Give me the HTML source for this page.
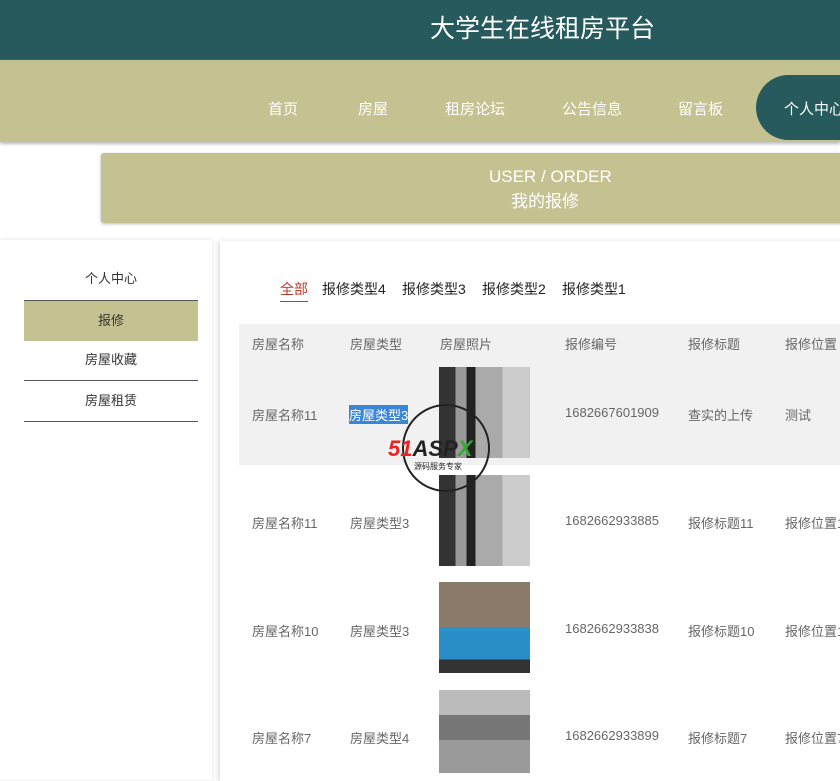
<!DOCTYPE html>
<html><head><meta charset="utf-8"><style>
body{margin:0;width:840px;height:773px;overflow:hidden;background:#fff;font-family:"Liberation Sans","Noto Sans CJK SC",sans-serif;position:relative;white-space:nowrap}
.a{position:absolute}
.hd{left:0;top:0;width:840px;height:60px;background:#265a5c;color:#fff;font-size:25px;line-height:58px}
.nav{left:0;top:60px;width:840px;height:82px;background:#c5c292;box-shadow:0 2px 3px #bbb}
.nav span{position:absolute;top:38px;color:#fff;font-size:15px}
.pill{left:756px;top:75px;width:120px;height:65px;border-radius:33px;background:#265a5c}
.ban{left:101px;top:153px;width:760px;height:70px;background:#c5c292;border-radius:3px;color:#fff;font-size:17px;line-height:25px;box-shadow:0 1px 3px #bbb}
.side{left:0;top:240px;width:212px;height:540px;background:#fff;box-shadow:0 0 4px #ddd}
.si{position:absolute;left:24px;width:174px;height:40px;text-align:center;line-height:40px;font-size:13px;color:#333}
.main{left:220px;top:241px;width:640px;height:540px;background:#fff;box-shadow:-2px 0 4px #ddd}
.t{position:absolute;font-size:13px;color:#666}
.tab{position:absolute;top:279px;font-size:14px;color:#222}
</style></head><body>
<div class="a hd"><span style="position:absolute;left:430px">大学生在线租房平台</span></div>
<div class="a nav">
<span style="left:268px">首页</span><span style="left:358px">房屋</span><span style="left:445px">租房论坛</span><span style="left:562px">公告信息</span><span style="left:678px">留言板</span>
</div>
<div class="a pill"></div>
<div class="a" style="left:784px;top:98px;color:#fff;font-size:15px">个人中心</div>
<div class="a ban"><div class="a" style="left:388px;top:11px">USER / ORDER</div><div class="a" style="left:410px;top:36px">我的报修</div></div>
<div class="a side">
<div class="si" style="top:19px">个人中心</div>
<div class="si" style="top:60px;background:#c5c292;border-top:1px solid #555">报修</div>
<div class="si" style="top:100px;border-bottom:1px solid #556">房屋收藏</div>
<div class="si" style="top:141px;border-bottom:1px solid #556">房屋租赁</div>
</div>
<div class="a main"></div>
<div class="tab" style="left:280px;color:#c0392b;border-bottom:1px solid #c0392b;padding-bottom:2px">全部</div>
<div class="tab" style="left:322px">报修类型4</div>
<div class="tab" style="left:402px">报修类型3</div>
<div class="tab" style="left:482px">报修类型2</div>
<div class="tab" style="left:562px">报修类型1</div>
<div class="a" style="left:239px;top:324px;width:601px;height:141px;background:#f1f1f1"></div>
<div class="t" style="left:252px;top:334px">房屋名称</div><div class="t" style="left:350px;top:334px">房屋类型</div><div class="t" style="left:440px;top:334px">房屋照片</div><div class="t" style="left:565px;top:334px">报修编号</div><div class="t" style="left:688px;top:334px">报修标题</div><div class="t" style="left:785px;top:334px">报修位置</div>

<div class="t" style="left:252px;top:405px">房屋名称11</div><div class="t" style="left:349px;top:405px;background:#3a86d6;color:#fff">房屋类型3</div><div class="t" style="left:565px;top:405px">1682667601909</div><div class="t" style="left:688px;top:405px">查实的上传</div><div class="t" style="left:785px;top:405px">测试</div>
<div class="a" style="left:439px;top:367px;width:91px;height:91px;background:linear-gradient(90deg,#333 0 18%,#999 18% 30%,#222 30% 40%,#aaa 40% 70%,#ccc 70%)"></div>

<div class="t" style="left:252px;top:513px">房屋名称11</div><div class="t" style="left:350px;top:513px">房屋类型3</div><div class="t" style="left:565px;top:513px">1682662933885</div><div class="t" style="left:688px;top:513px">报修标题11</div><div class="t" style="left:785px;top:513px">报修位置1</div>
<div class="a" style="left:439px;top:475px;width:91px;height:91px;background:linear-gradient(90deg,#333 0 18%,#999 18% 30%,#222 30% 40%,#aaa 40% 70%,#ccc 70%)"></div>

<div class="t" style="left:252px;top:621px">房屋名称10</div><div class="t" style="left:350px;top:621px">房屋类型3</div><div class="t" style="left:565px;top:621px">1682662933838</div><div class="t" style="left:688px;top:621px">报修标题10</div><div class="t" style="left:785px;top:621px">报修位置1</div>
<div class="a" style="left:439px;top:582px;width:91px;height:91px;background:linear-gradient(180deg,#8a7a6a 0 50%,#2a8fc8 50% 85%,#333 85%)"></div>

<div class="t" style="left:252px;top:728px">房屋名称7</div><div class="t" style="left:350px;top:728px">房屋类型4</div><div class="t" style="left:565px;top:728px">1682662933899</div><div class="t" style="left:688px;top:728px">报修标题7</div><div class="t" style="left:785px;top:728px">报修位置7</div>
<div class="a" style="left:439px;top:690px;width:91px;height:83px;background:linear-gradient(180deg,#bbb 0 30%,#777 30% 60%,#9a9a9a 60%)"></div>

<div class="a" style="left:402px;top:404px;width:84px;height:84px;border:2px solid #222;border-radius:50%"></div>
<div class="a" style="left:388px;top:436px;font:italic bold 22px 'Liberation Sans',sans-serif;color:#e22">51<span style="color:#222">ASP</span><span style="color:#3a3">X</span></div>
<div class="a" style="left:414px;top:461px;font-size:8px;color:#222">源码服务专家</div>
</body></html>
